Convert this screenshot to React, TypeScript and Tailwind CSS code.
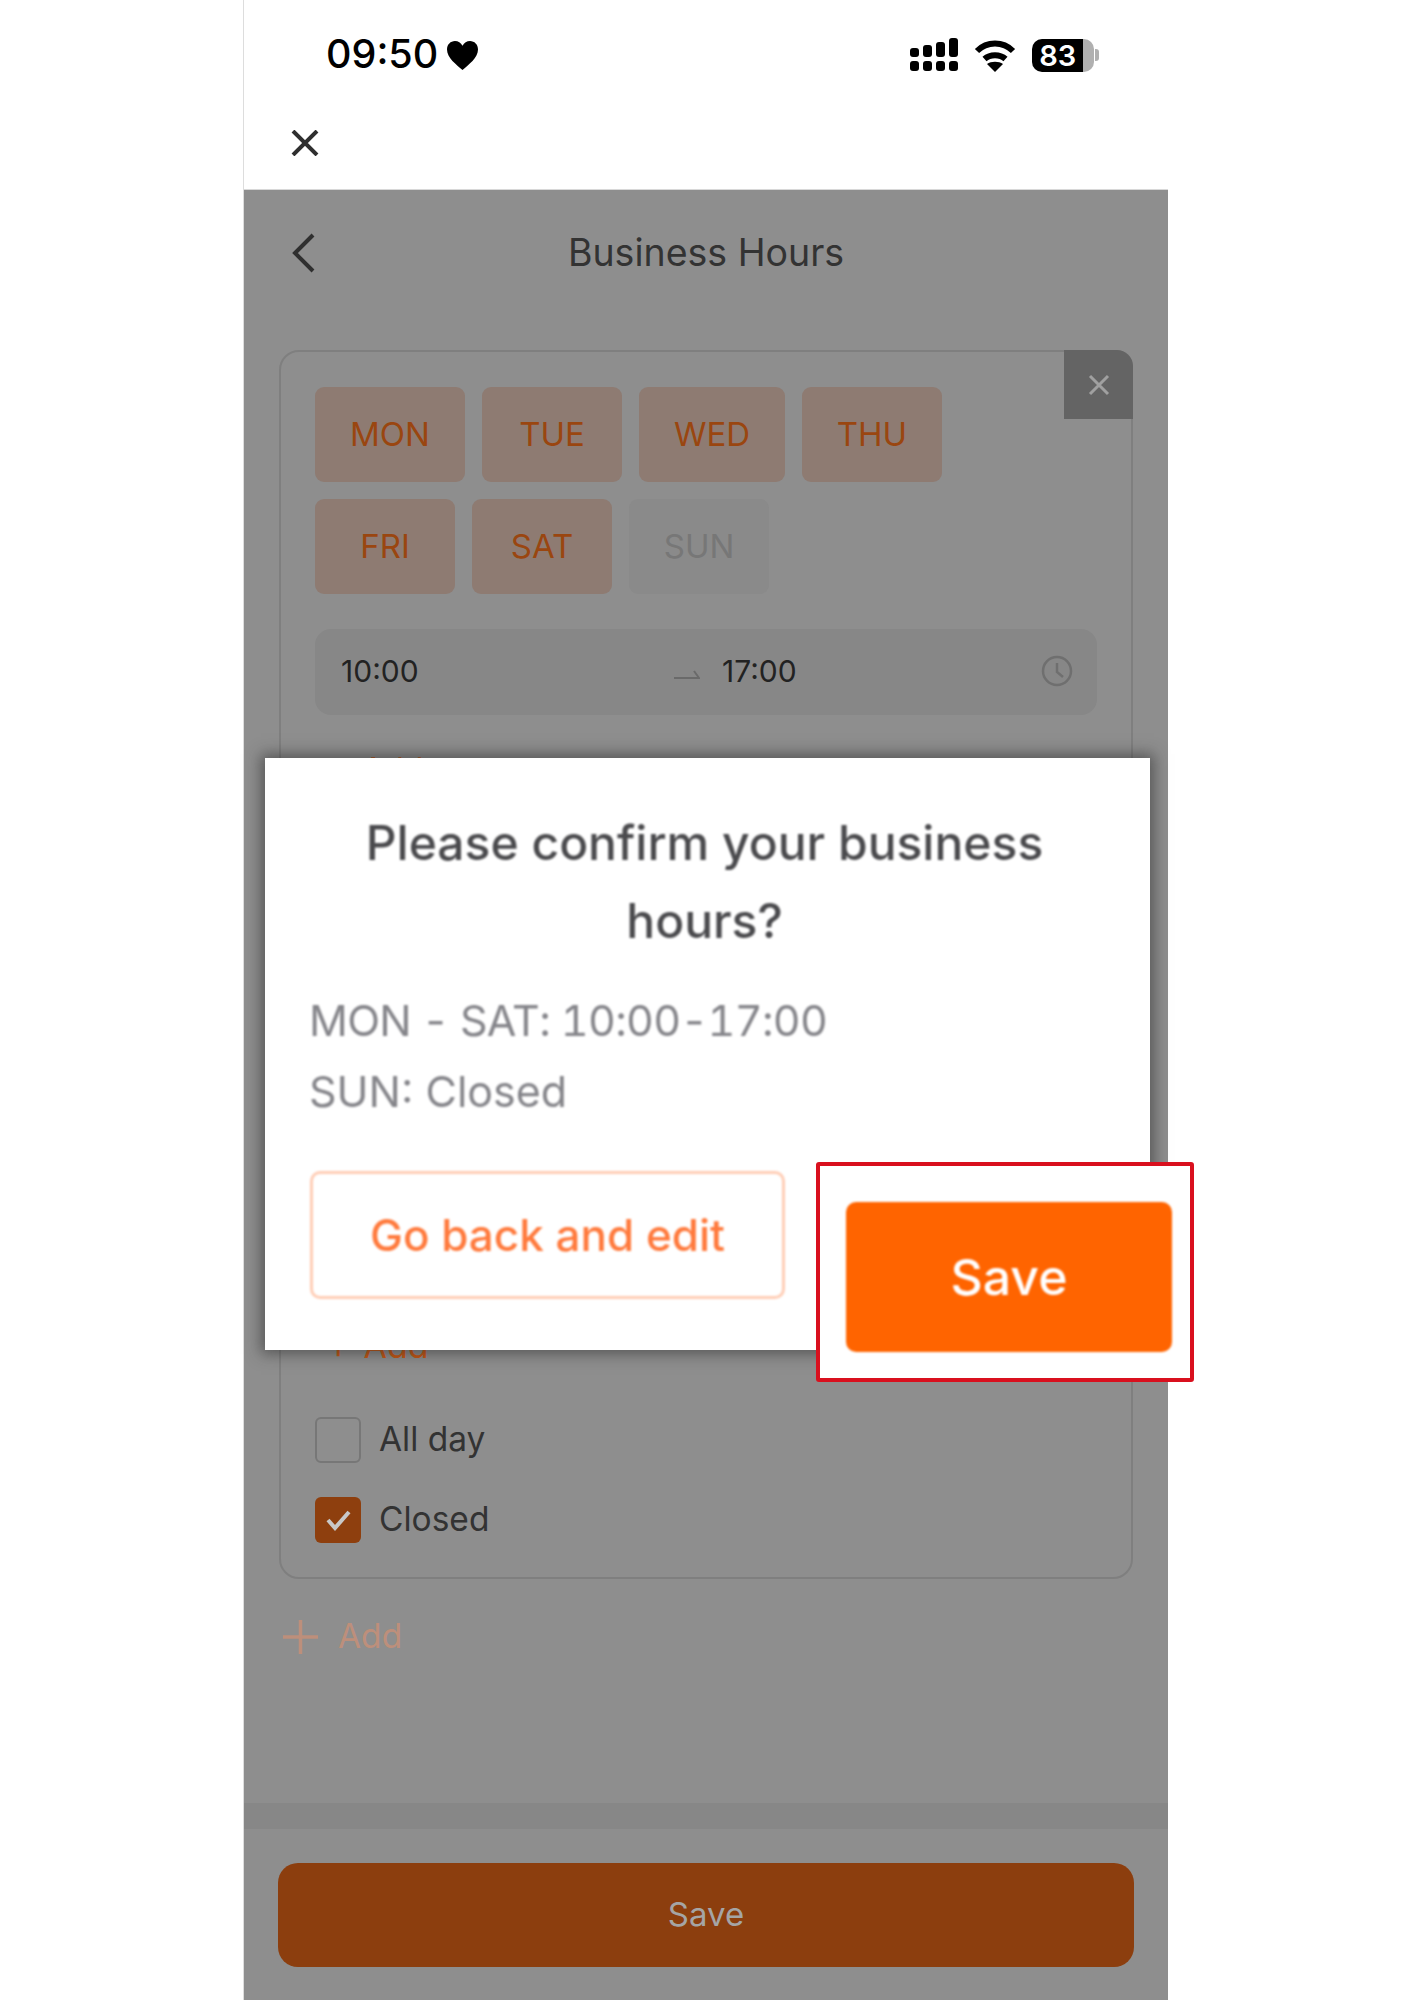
import React from "react";

const F = "font-['Inter','Liberation_Sans',sans-serif]";

function Chip({ label, w, off }: { label: string; w: string; off?: boolean }) {
  return (
    <div
      className={`${w} h-[95px] rounded-[9px] flex items-center justify-center text-[33px] ${
        off ? "bg-[#8a8a8a] text-[#777777]" : "bg-[#8e7b72] text-[#9a4610]"
      }`}
    >
      {label}
    </div>
  );
}

function Signal() {
  const cols = [
    [0, 48],
    [13, 45],
    [26, 42],
    [39, 38],
  ];
  return (
    <svg width="48" height="34" viewBox="909 38 48 34" fill="#000">
      {cols.map(([dx, top]) => (
        <g key={dx}>
          <rect x={909 + dx} y={top} width="9" height={57 - top} rx="3" />
          <rect x={909 + dx} y={61} width="9" height={10} rx="3" />
        </g>
      ))}
    </svg>
  );
}

function Wifi() {
  return (
    <svg width="42" height="33" viewBox="0 0 42 33" fill="none" stroke="#000" strokeWidth="6">
      <path d="M3 12C13 2 29 2 39 12" />
      <path d="M10.5 20C16 15 26 15 31.5 20" />
      <path d="M21 33L13 25C17 22 25 22 29 25Z" fill="#000" stroke="none" />
    </svg>
  );
}

export default function App() {
  return (
    <div className={`${F} w-[1414px] h-[2000px] bg-white overflow-hidden`}>
      <div className="relative ml-[243px] w-[925px] h-[2000px] border-l border-[#dddddd] flex flex-col">
        {/* status bar */}
        <div className="h-[110px] flex items-center pl-[82px]">
          <span className="text-[39.5px] font-medium text-black leading-none">09:50</span>
          <svg className="ml-[9px]" width="31" height="29" viewBox="0 0 33 29" preserveAspectRatio="none" fill="#000">
            <path d="M16.5 29C10 23.5 0 17 0 8.5 0 3.5 3.8 0 8.5 0c3.4 0 6.300 1.800 8 4.800C18.200 1.800 21.100 0 24.500 0 29.200 0 33 3.500 33 8.500 33 17 23 23.500 16.500 29Z" />
          </svg>
          <div className="ml-[432px] flex items-center gap-[16px]">
            <Signal />
            <Wifi />
            <div className="flex items-center">
              <div className="w-[62px] h-[33px] rounded-[10px] overflow-hidden flex">
                <div className="w-[51px] bg-black text-white text-[29px] font-semibold flex items-center justify-center leading-none">
                  83
                </div>
                <div className="flex-1 bg-[#b0b0b0]" />
              </div>
              <div className="w-[4px] h-[12px] ml-[1px] rounded-r-[3px] bg-[#b0b0b0]" />
            </div>
          </div>
        </div>
        {/* close row */}
        <div className="h-[80px] border-b border-[#d8d8d8] pl-[47px] pt-[20px]">
          <svg width="28" height="26" viewBox="0 0 28 26" fill="none" stroke="#2f2f2f" strokeWidth="4">
            <path d="M2 1L26 25M26 1L2 25" />
          </svg>
        </div>

        {/* dimmed page */}
        <div className="flex-1 bg-[#8e8e8e] flex flex-col">
          <div className="h-[126px] relative flex items-center justify-center">
            <svg className="absolute left-[47px] top-[43px]" width="24" height="40" viewBox="0 0 24 40" fill="none" stroke="#2f2f2f" strokeWidth="4">
              <path d="M22 2L4 20L22 38" />
            </svg>
            <span className="text-[37.5px] text-[#333333] leading-none">Business Hours</span>
          </div>

          <div className="relative mt-[34px] mx-[35px] h-[1229px] rounded-[20px] border-2 border-[#7f7f7f] pt-[35px] px-[34px]">
            <div className="absolute -top-[2px] -right-[2px] w-[69px] h-[69px] rounded-tr-[16px] bg-[#646464] flex items-center justify-center">
              <svg width="22" height="22" viewBox="0 0 22 22" fill="none" stroke="#a0a0a0" strokeWidth="3">
                <path d="M2 2L20 20M20 2L2 20" />
              </svg>
            </div>
            <div className="flex gap-[17px]">
              <Chip label="MON" w="w-[150px]" />
              <Chip label="TUE" w="w-[140px]" />
              <Chip label="WED" w="w-[146px]" />
              <Chip label="THU" w="w-[140px]" />
            </div>
            <div className="flex gap-[17px] mt-[17px]">
              <Chip label="FRI" w="w-[140px]" />
              <Chip label="SAT" w="w-[140px]" />
              <Chip label="SUN" w="w-[140px]" off />
            </div>
            <div className="mt-[35px] h-[86px] rounded-[16px] bg-[#878787] flex items-center pl-[26px] pb-[2px] text-[30px] text-[#222222]">
              <span className="w-[333px]">10:00</span>
              <svg className="mt-[6px]" width="26" height="14" viewBox="0 0 26 14" fill="none" stroke="#6a6a6a" strokeWidth="2">
                <path d="M0 11H25L20 4" />
              </svg>
              <span className="ml-[22px]">17:00</span>
              <svg className="ml-[244px]" width="32" height="32" viewBox="0 0 32 32" fill="none" stroke="#6f6f6f" strokeWidth="2.500">
                <circle cx="16" cy="16" r="14" />
                <path d="M16 8V17L22 22" />
              </svg>
            </div>

            <div className="mt-[39px] pl-[12px] flex items-center gap-[14px] text-[32px] text-[#b25a22] leading-none">
              <span>+</span>
              <span>Add</span>
            </div>
            <div className="mt-[543px] pl-[12px] flex items-center gap-[14px] text-[34px] text-[#c9560f] leading-none">
              <span>+</span>
              <span>Add</span>
            </div>

            <div className="mt-[54px] flex items-center gap-[18px] text-[33.5px] text-[#333333] leading-none">
              <div className="w-[46px] h-[46px] rounded-[6px] border-2 border-[#777777]" />
              <span>All day</span>
            </div>
            <div className="mt-[34px] flex items-center gap-[18px] text-[33.5px] text-[#333333] leading-none">
              <div className="w-[46px] h-[46px] rounded-[6px] bg-[#8e3f0e] flex items-center justify-center">
                <svg width="25" height="21" viewBox="0 0 25 21" fill="none" stroke="#c8c8c8" strokeWidth="4">
                  <path d="M2 10L9 18L23 2" />
                </svg>
              </div>
              <span>Closed</span>
            </div>
          </div>

          <div className="mt-[41px] ml-[39px] flex items-center gap-[20px] text-[33.5px] text-[#bd8f7b] leading-none">
            <svg width="35" height="34" viewBox="0 0 35 34" fill="none" stroke="#bd8f7b" strokeWidth="3.500">
              <path d="M0 17H35M17.500 0V34" />
            </svg>
            <span>Add</span>
          </div>

          <div className="mt-[149px] h-[26px] bg-[#878787]" />
          <div className="mt-[34px] mx-[34px] h-[104px] rounded-[20px] bg-[#8c3e0e] flex items-center justify-center text-[33px] text-[#a5a5a5]">
            Save
          </div>
        </div>

        {/* confirm dialog */}
        <div className="absolute left-[21px] top-[758px] w-[885px] h-[592px] bg-white shadow-[0_0_14px_4px_rgba(40,40,40,0.55)]">
          <div className="blur-[0.8px]">
            <div className="pt-[46px] text-center text-[48px] leading-[78px] font-medium text-[#4a4a4d] pl-[27px] pr-[33px]">
              <p>Please confirm your business</p>
              <p>hours?</p>
            </div>
            <div className="mt-[25px] pl-[44px] text-[43px] leading-[71px] text-[#85858a]">
              <p className="tabular-nums tracking-[-0.7px]">MON - SAT: 10:00-17:00</p>
              <p>SUN: Closed</p>
            </div>
            <div className="mt-[44px] ml-[45px] w-[475px] h-[128px] rounded-[10px] border-[3px] border-[#ffcdb5] flex items-center justify-center text-[44px] font-medium text-[#ff7a3d]">
              Go back and edit
            </div>
          </div>
        </div>

        {/* highlighted button annotation */}
        <div className="absolute left-[572px] top-[1162px] w-[378px] h-[220px] bg-white border-[4px] border-[#d9101e] rounded-[3px] pt-[36px] pl-[26px]">
          <div className="w-[326px] h-[150px] rounded-[10px] bg-[#ff6400] flex items-center justify-center text-[50px] font-medium text-white blur-[0.8px]">
            Save
          </div>
        </div>
      </div>
    </div>
  );
}
